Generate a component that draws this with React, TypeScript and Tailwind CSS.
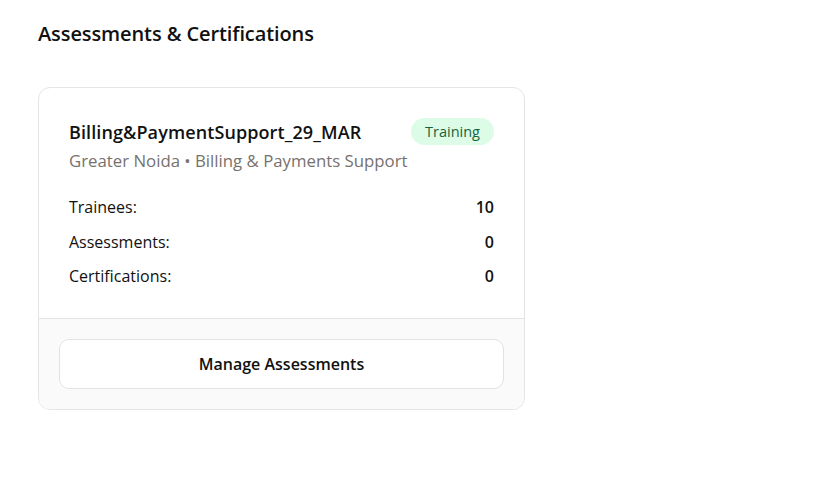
import React from 'react';

const stats = [
  { label: 'Trainees:', value: '10' },
  { label: 'Assessments:', value: '0' },
  { label: 'Certifications:', value: '0' },
];

export default function App() {
  return (
    <div className="min-h-screen bg-white px-[38px] pt-[20px] text-[#111] font-['Open_Sans',sans-serif]">
      <h1 className="text-[20px] leading-[28px] font-semibold tracking-[-0.1px]">Assessments &amp; Certifications</h1>

      <div className="mt-[39px] w-[487px] rounded-[12px] border border-[#e5e5e5] bg-white overflow-hidden">
        <div className="px-[30px] pt-[30px] pb-[30px]">
          <div className="flex items-start justify-between">
            <div>
              <div className="text-[18px] leading-[29px] font-semibold tracking-[0.1px]">Billing&amp;PaymentSupport_29_MAR</div>
              <div className="text-[16.8px] leading-[27px] text-[#77716d]">Greater Noida • Billing &amp; Payments Support</div>
            </div>
            <span className="rounded-full bg-[#dcfce7] px-[14px] h-[27px] flex items-center text-[14.5px] font-medium text-[#17643a]">Training</span>
          </div>

          <div className="mt-[21px] flex flex-col gap-[10.5px]">
            {stats.map((s) => (
              <div key={s.label} className="flex items-center justify-between text-[16px] leading-[24px]">
                <span>{s.label}</span>
                <span className="font-semibold">{s.value}</span>
              </div>
            ))}
          </div>
        </div>

        <div className="border-t border-[#e5e5e5] bg-[#fafafa] p-[20px]">
          <button className="w-full h-[50px] rounded-[10px] border border-[#e3e3e3] bg-white text-[16px] font-semibold text-[#111]">
            Manage Assessments
          </button>
        </div>
      </div>
    </div>
  );
}
